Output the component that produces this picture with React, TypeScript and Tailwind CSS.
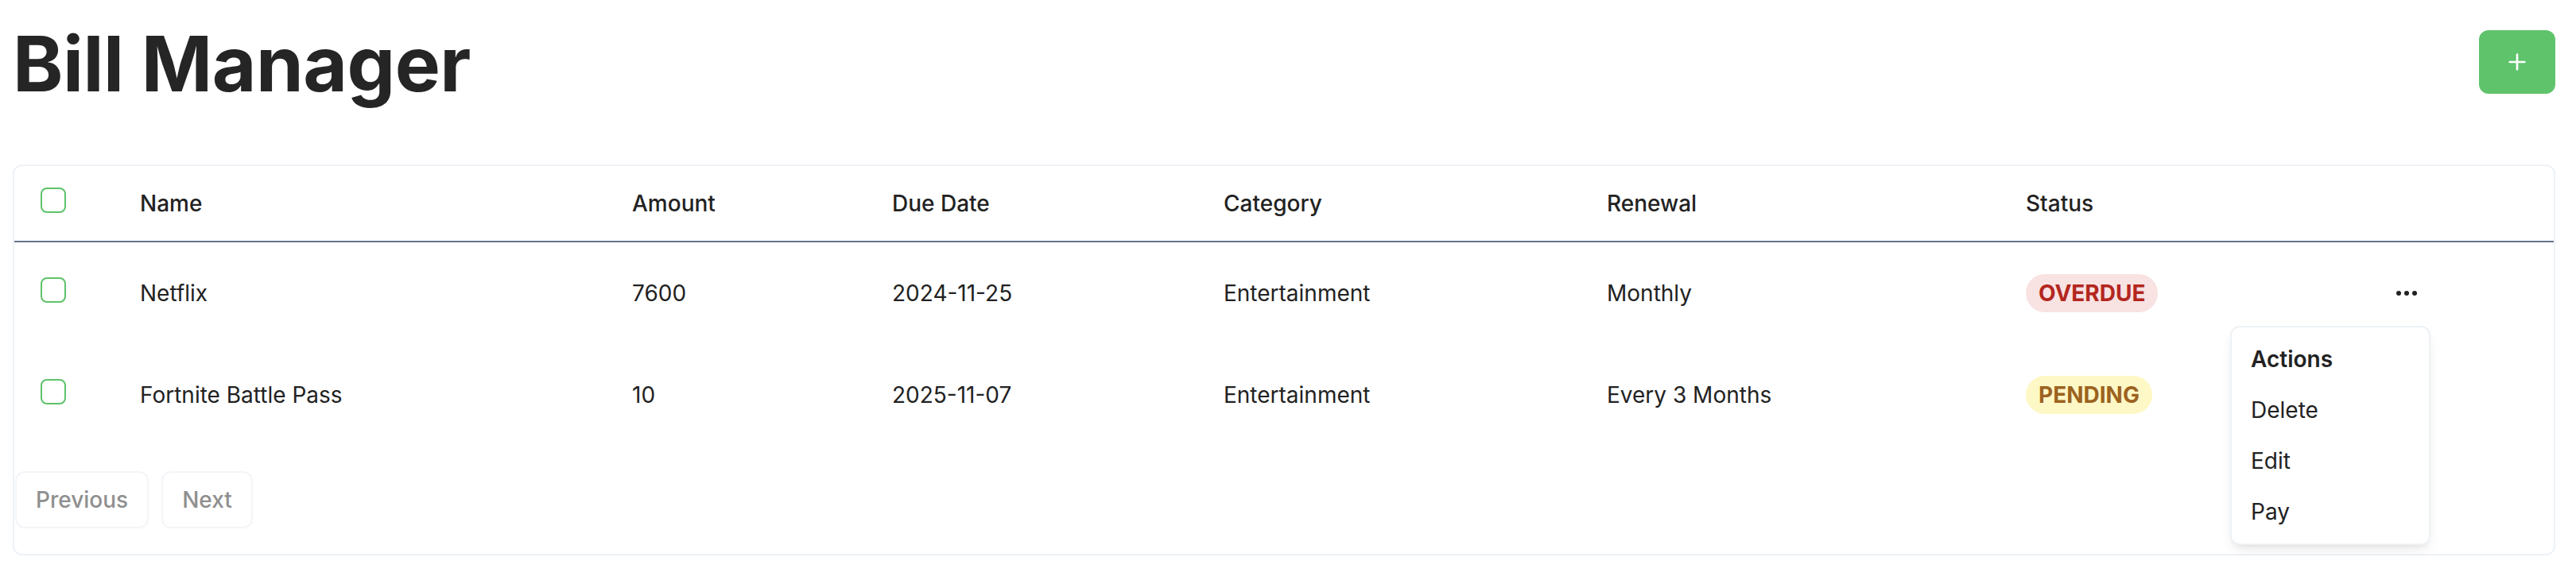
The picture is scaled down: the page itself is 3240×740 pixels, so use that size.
import { Plus } from "lucide-react"

type Bill = {
  name: string
  amount: string
  due: string
  category: string
  renewal: string
  status: "OVERDUE" | "PENDING"
}

const bills: Bill[] = [
  { name: "Netflix", amount: "7600", due: "2024-11-25", category: "Entertainment", renewal: "Monthly", status: "OVERDUE" },
  { name: "Fortnite Battle Pass", amount: "10", due: "2025-11-07", category: "Entertainment", renewal: "Every 3 Months", status: "PENDING" },
]

const cols = "grid grid-cols-[158px_619px_327px_417px_482px_527px_466px_1fr]"

function Box() {
  return <span className="mb-[8px] block h-[32px] w-[32px] rounded-[8px] border-2 border-[#5ec26a] bg-white" />
}

function Dots() {
  return (
    <svg width="26" height="6" viewBox="0 0 26 6" aria-hidden>
      <circle cx="3" cy="3" r="3" fill="#222" />
      <circle cx="13" cy="3" r="3" fill="#222" />
      <circle cx="23" cy="3" r="3" fill="#222" />
    </svg>
  )
}

function Badge({ status }: { status: Bill["status"] }) {
  const tone = status === "OVERDUE" ? "bg-[#f8e2e2] text-[#b3261e]" : "bg-[#fef8c6] text-[#9c6220]"
  return (
    <span className={`inline-flex h-[48px] items-center rounded-full px-[16px] text-[28px] font-bold leading-[40px] ${tone}`}>
      {status}
    </span>
  )
}

export default function App() {
  return (
    <div className="relative min-h-[740px] bg-white pl-[16px] pr-[26px] pt-[32px] font-['Inter',sans-serif] text-[#222]">
      <div className="flex items-start justify-between">
        <h1 className="text-[96px] font-bold leading-[96px] tracking-[-0.5px] text-[#252525]">Bill Manager</h1>
        <button
          type="button"
          className="mt-[6px] flex h-[80px] w-[96px] items-center justify-center rounded-[12px] bg-[#5fc36b] text-white"
          aria-label="Add bill"
        >
          <Plus size={32} strokeWidth={2} />
        </button>
      </div>

      <div className="mt-[79px] rounded-[12px] border-2 border-[#eef2f6] bg-white">
        <div className={`${cols} h-[96px] items-center border-b-2 border-[#64748b] text-[28px] font-medium`}>
          <div className="flex items-center pl-[33px]">
            <Box />
          </div>
          <div>Name</div>
          <div>Amount</div>
          <div>Due Date</div>
          <div>Category</div>
          <div>Renewal</div>
          <div>Status</div>
          <div />
        </div>

        {bills.map((b, i) => (
          <div key={b.name} className={`${cols} h-[128px] items-center text-[28px]`}>
            <div className="flex items-center pl-[33px]">
              <Box />
            </div>
            <div>{b.name}</div>
            <div>{b.amount}</div>
            <div>{b.due}</div>
            <div>{b.category}</div>
            <div>{b.renewal}</div>
            <div>
              <Badge status={b.status} />
            </div>
            <div className="flex items-center">{i === 0 && <Dots />}</div>
          </div>
        ))}

        <div className="flex items-center gap-[16px] py-[32px] pl-[1px]">
          <button
            type="button"
            disabled
            className="h-[72px] rounded-[12px] border-2 border-[#f3f5f8] px-[24px] text-[28px] font-medium text-[#8f8f8f]"
          >
            Previous
          </button>
          <button
            type="button"
            disabled
            className="h-[72px] rounded-[12px] border-2 border-[#f3f5f8] px-[24px] text-[28px] font-medium text-[#8f8f8f]"
          >
            Next
          </button>
        </div>
      </div>

      <div className="absolute left-[2805px] top-[410px] w-[252px] rounded-[12px] border-2 border-[#eef2f6] bg-white p-[8px] text-[28px] shadow-[0_8px_16px_-4px_rgba(0,0,0,0.1),0_4px_6px_-4px_rgba(0,0,0,0.08)]">
        <div className="px-[16px] py-[12px] font-semibold leading-[40px]">Actions</div>
        <div className="px-[16px] py-[12px] leading-[40px]">Delete</div>
        <div className="px-[16px] py-[12px] leading-[40px]">Edit</div>
        <div className="px-[16px] py-[12px] leading-[40px]">Pay</div>
      </div>
    </div>
  )
}
